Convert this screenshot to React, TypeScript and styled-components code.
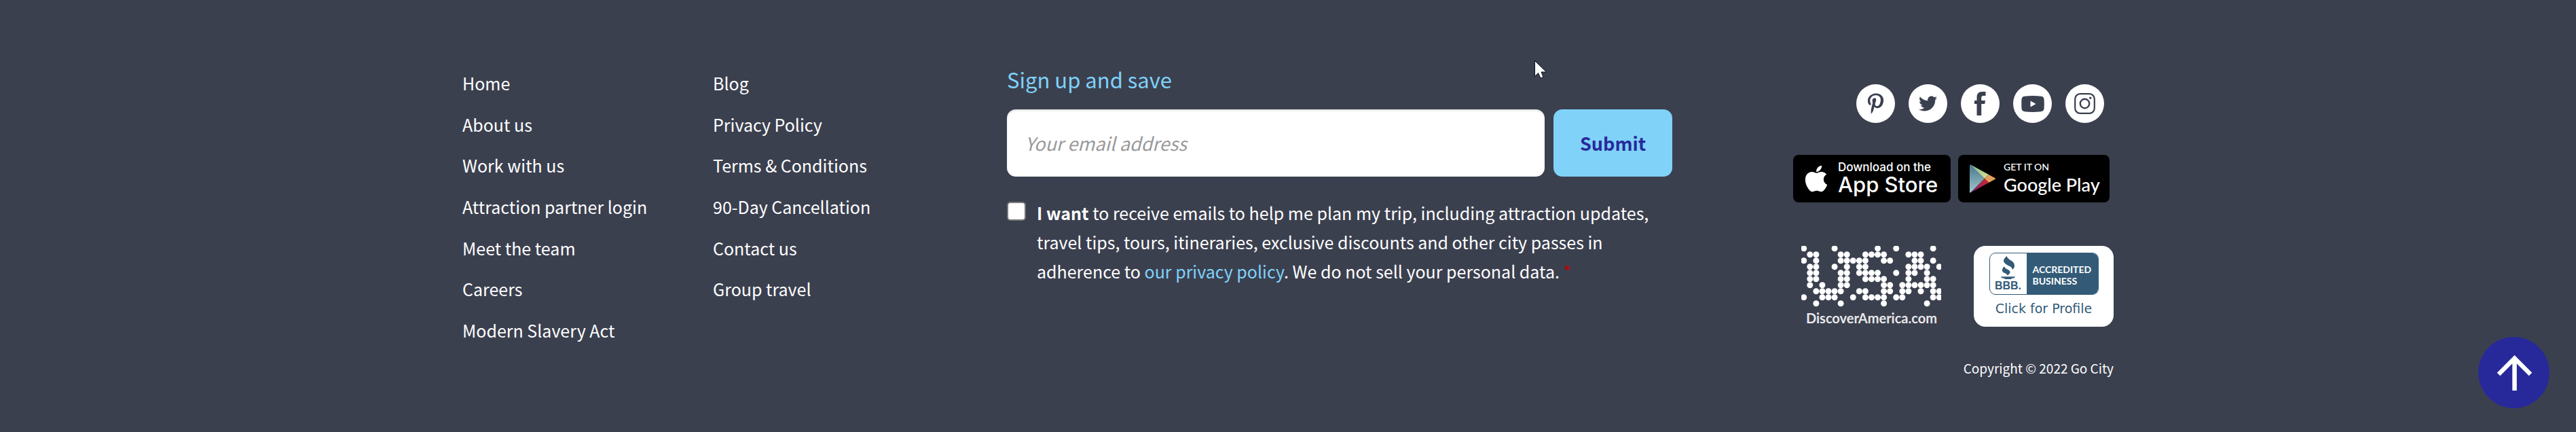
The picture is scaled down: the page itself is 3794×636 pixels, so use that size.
import React from "react";
import styled, { createGlobalStyle } from "styled-components";
import { FaPinterestP, FaTwitter, FaApple } from "react-icons/fa";

const colors = {
  slate: "#3b404f",
  sky: "#80d2f9",
  navy: "#27299a",
  bbb: "#335b78",
};

const GlobalStyle = createGlobalStyle`
  * { box-sizing: border-box; }
  body {
    margin: 0;
    background: ${colors.slate};
    color: #fff;
    font-family: "Noto Sans CJK SC", "Noto Sans", sans-serif;
    font-size: 25px;
  }
  a { color: inherit; text-decoration: none; }
  input, button { font-family: inherit; }
`;

const Footer = styled.footer`
  min-height: 100vh;
  padding: 92px 24px 80px;
`;

const Container = styled.div`
  display: grid;
  grid-template-columns: 802fr 980fr 650fr;
  align-items: start;
  max-width: 2432px;
  margin: 0 auto;
`;

const LinkGrid = styled.ul`
  display: grid;
  grid-auto-flow: column;
  grid-template-rows: repeat(7, 1fr);
  grid-template-columns: 369fr 433fr;
  align-items: center;
  min-height: 424px;
  margin: 0;
  padding: 0;
  list-style: none;
`;

const LinkItem = styled.li<{ $column: number; $row: number }>`
  grid-column: ${(p) => p.$column};
  grid-row: ${(p) => p.$row};
`;

const Title = styled.h2`
  margin: 0 0 19px;
  color: ${colors.sky};
  font-size: 31px;
  font-weight: 400;
  line-height: 50px;
`;

const EmailRow = styled.div`
  display: flex;
  gap: 13px;
  height: 99px;
`;

const EmailInput = styled.input`
  flex: 1;
  min-width: 0;
  padding: 0 27px;
  border: 0;
  border-radius: 13px;
  background: #fff;
  box-shadow: inset 0 2px 3px rgba(0, 0, 0, 0.12);
  font-size: 27px;
  &::placeholder { color: #999; font-style: italic; opacity: 1; }
`;

const SubmitButton = styled.button`
  width: 175px;
  border: 0;
  border-radius: 13px;
  background: ${colors.sky};
  color: ${colors.navy};
  font-size: 27px;
  font-weight: 700;
`;

const Consent = styled.div`
  display: flex;
  align-items: flex-start;
  gap: 16px;
  margin-top: 32px;
`;

const Checkbox = styled.input`
  flex: none;
  width: 28px;
  height: 28px;
  margin: 5px 0 0;
  appearance: none;
  border: 2px solid #767676;
  border-radius: 5px;
  background: #fff;
  &:checked { background: ${colors.navy}; }
`;

const ConsentText = styled.label`
  line-height: 43px;
`;

const PolicyLink = styled.a`
  color: ${colors.sky};
`;

const Required = styled.span`
  color: #c00000;
`;

const Aside = styled.div`
  display: flex;
  flex-direction: column;
  align-items: flex-end;
  padding-top: 32px;
`;

const SocialRow = styled.nav`
  display: flex;
  gap: 20px;
  margin: 0 14px 47px 0;
`;

const SocialLink = styled.a`
  display: grid;
  place-items: center;
  width: 57px;
  height: 57px;
  border-radius: 50%;
  background: #fff;
  color: ${colors.slate};
`;

const StoreRow = styled.div`
  display: flex;
  gap: 11px;
  margin: 0 6px 64px 0;
`;

const StoreBadge = styled.a<{ $width: number; $inset: number; $gap: number }>`
  display: flex;
  align-items: center;
  gap: ${(p) => p.$gap}px;
  width: ${(p) => p.$width}px;
  height: 70px;
  padding-left: ${(p) => p.$inset}px;
  border-radius: 8px;
  background: #000;
  white-space: nowrap;
  svg { flex: none; }
`;

const StoreText = styled.span<{ $font: string }>`
  display: flex;
  flex-direction: column;
  font-family: ${(p) => p.$font}, sans-serif;
`;

const StoreSmall = styled.span<{ $size: number }>`
  font-size: ${(p) => p.$size}px;
  font-weight: 500;
  line-height: 18px;
`;

const StoreName = styled.span<{ $size: number; $weight: number }>`
  font-size: ${(p) => p.$size}px;
  font-weight: ${(p) => p.$weight};
  line-height: 34px;
`;

const PartnerRow = styled.div`
  display: flex;
  align-items: flex-start;
  gap: 48px;
  margin-bottom: 47px;
`;

const UsaLink = styled.a`
  display: block;
  width: 206px;
  svg { display: block; }
`;

const UsaCaption = styled.span`
  display: block;
  padding-left: 7px;
  font: 700 20px/24px Lato, sans-serif;
  color: #e8e8ea;
  white-space: nowrap;
`;

const BbbLink = styled.a`
  display: flex;
  flex-direction: column;
  align-items: center;
  width: 206px;
  height: 119px;
  padding-top: 10px;
  border-radius: 17px;
  background: #fff;
  color: ${colors.bbb};
`;

const BbbSeal = styled.span`
  display: flex;
  width: 161px;
  height: 62px;
  border: 1px solid ${colors.bbb};
  border-radius: 9px;
  overflow: hidden;
`;

const BbbMark = styled.span`
  display: flex;
  flex-direction: column;
  align-items: center;
  width: 54px;
  padding-top: 4px;
  font: 700 16px/16px "Liberation Sans", sans-serif;
`;

const BbbStatus = styled.span`
  flex: 1;
  padding: 15px 0 0 9px;
  background: ${colors.bbb};
  color: #fff;
  font: 700 14px/17px Lato, sans-serif;
`;

const BbbAction = styled.span`
  margin-top: 8px;
  font: 400 19px/24px "DejaVu Sans", sans-serif;
  white-space: nowrap;
`;

const Copyright = styled.small`
  font-size: 19px;
  line-height: 28px;
`;

const TopButton = styled.button`
  position: fixed;
  right: 39px;
  bottom: 35px;
  display: grid;
  place-items: center;
  width: 105px;
  height: 105px;
  padding: 0;
  border: 0;
  border-radius: 50%;
  background: ${colors.navy};
`;

const Pointer = styled.svg`
  position: absolute;
  top: 88px;
  left: 2260px;
  pointer-events: none;
`;

const linkColumns = [
  ["Home", "About us", "Work with us", "Attraction partner login", "Meet the team", "Careers", "Modern Slavery Act"],
  ["Blog", "Privacy Policy", "Terms & Conditions", "90-Day Cancellation", "Contact us", "Group travel"],
];

const usaDots = [
  [0, 5, 12, 15, 21],
  [1, 2, 6, 7, 10, 11, 12, 13, 17, 18, 19],
  [0, 2, 6, 7, 8, 9, 10, 13, 14, 18, 19, 21],
  [1, 2, 5, 7, 9, 10, 17, 18, 19, 20, 22],
  [1, 2, 6, 7, 9, 10, 11, 12, 15, 17, 18, 20],
  [1, 2, 6, 7, 10, 11, 12, 13, 17, 20, 21],
  [1, 3, 6, 7, 13, 14, 16, 17, 18, 19, 20, 21],
  [2, 3, 4, 5, 6, 9, 10, 13, 14, 16, 17, 19, 21, 22],
  [0, 3, 4, 5, 8, 10, 11, 12, 13, 15, 16, 21, 22],
  [2, 6, 13, 20],
];

const FacebookIcon = () => (
  <svg width="17" height="35" viewBox="0 0 17 35" fill="currentColor" aria-hidden="true">
    <path d="M3.5 35V18H0v-5h3.500V8.500C3.500 3 6 0 11.500 0H16.500v6h-3C11 6 10.200 7 10.200 9v4H16l-.8 5h-5v17z" />
  </svg>
);

const YoutubeIcon = () => (
  <svg width="34" height="24" viewBox="0 0 34 24" aria-hidden="true">
    <path
      fill="currentColor"
      d="M5 .8Q17-.6 29 .8 33 1 33.500 5 34 12 33.500 19 33 23 29 23.200 17 24.600 5 23.200 1 23 .5 19 0 12 .5 5 1 1 5 .8z"
    />
    <path fill="#fff" d="M13.500 7.500v9l8-4.500z" />
  </svg>
);

const InstagramIcon = () => (
  <svg width="31" height="31" viewBox="0 0 31 31" fill="none" stroke="currentColor" aria-hidden="true">
    <rect x="1.200" y="1.200" width="28.600" height="28.600" rx="7.500" strokeWidth="2.200" />
    <circle cx="15.500" cy="15.500" r="6.700" strokeWidth="2.400" />
    <circle cx="23.700" cy="7.300" r="1.700" fill="currentColor" stroke="none" />
  </svg>
);

const PlayIcon = () => (
  <svg width="38" height="42" viewBox="0 0 38 42" aria-hidden="true">
    <defs>
      <linearGradient id="playBlue" x1="0" y1="0" x2="0" y2="1">
        <stop offset="0" stopColor="#4a7590" />
        <stop offset="1" stopColor="#9cc9c9" />
      </linearGradient>
      <linearGradient id="playGreen" x1="0" y1="0" x2="1" y2="1">
        <stop offset="0" stopColor="#7fc0a0" />
        <stop offset="1" stopColor="#dbe08a" />
      </linearGradient>
      <linearGradient id="playRed" x1="1" y1="0" x2="0" y2="1">
        <stop offset="0" stopColor="#d2222c" />
        <stop offset="1" stopColor="#7c2a7a" />
      </linearGradient>
    </defs>
    <path fill="url(#playBlue)" d="M0 1.500Q0 0 1.500.5L22 21 1.500 41.500Q0 42 0 40.500z" />
    <path fill="url(#playGreen)" d="M1 .3L28 15l-6 6z" />
    <path fill="#e3a05c" d="M28 15l9.500 5.300q.8.700 0 1.400L28 27l-6-6z" />
    <path fill="url(#playRed)" d="M22 21l6 6L1 41.700z" />
  </svg>
);

const TorchIcon = () => (
  <svg width="23" height="36" viewBox="0 0 24 38" fill="currentColor" aria-hidden="true">
    <path d="M10 0q1 4 7 7 5 3 5 8 0 4-3 6-1-4-6-6-7-3-8-7 0-4 5-8z" />
    <path d="M6 16q1 3 6 5 4 2 3 5-1 2-4 4-1-3-5-4-4-2-3-5 0-3 3-5z" />
    <path d="M1 32h22l-1 2q-5 0-5 2H7q0-2-5-2z" />
  </svg>
);

const socials = [
  { label: "Pinterest", icon: <FaPinterestP size={31} /> },
  { label: "Twitter", icon: <FaTwitter size={27} /> },
  { label: "Facebook", icon: <FacebookIcon /> },
  { label: "YouTube", icon: <YoutubeIcon /> },
  { label: "Instagram", icon: <InstagramIcon /> },
];

export default function App() {
  return (
    <>
      <GlobalStyle />
      <Footer>
        <Container>
          <nav aria-label="Footer">
            <LinkGrid>
              {linkColumns.map((column, c) =>
                column.map((text, r) => (
                  <LinkItem key={text} $column={c + 1} $row={r + 1}>
                    <a href="#">{text}</a>
                  </LinkItem>
                ))
              )}
            </LinkGrid>
          </nav>

          <form onSubmit={(e) => e.preventDefault()}>
            <Title>Sign up and save</Title>
            <EmailRow>
              <EmailInput type="email" placeholder="Your email address" aria-label="Your email address" />
              <SubmitButton type="submit">Submit</SubmitButton>
            </EmailRow>
            <Consent>
              <Checkbox type="checkbox" id="consent" />
              <ConsentText htmlFor="consent">
                <b>I want</b> to receive emails to help me plan my trip, including attraction updates, travel tips,
                tours, itineraries, exclusive discounts and other city passes in adherence to{" "}
                <PolicyLink href="#">our privacy policy</PolicyLink>. We do not sell your personal data.
                <Required> *</Required>
              </ConsentText>
            </Consent>
          </form>

          <Aside>
            <SocialRow aria-label="Social media">
              {socials.map((s) => (
                <SocialLink key={s.label} href="#" aria-label={s.label}>
                  {s.icon}
                </SocialLink>
              ))}
            </SocialRow>
            <StoreRow>
              <StoreBadge href="#" $width={232} $inset={12} $gap={10}>
                <FaApple size={44} />
                <StoreText $font="Inter">
                  <StoreSmall $size={17}>Download on the</StoreSmall>
                  <StoreName $size={31} $weight={500}>App Store</StoreName>
                </StoreText>
              </StoreBadge>
              <StoreBadge href="#" $width={223} $inset={17} $gap={12}>
                <PlayIcon />
                <StoreText $font="Lato">
                  <StoreSmall $size={14}>GET IT ON</StoreSmall>
                  <StoreName $size={27} $weight={500}>Google Play</StoreName>
                </StoreText>
              </StoreBadge>
            </StoreRow>
            <PartnerRow>
              <UsaLink href="#">
                <svg width="206" height="94" viewBox="0 0 206 94" fill="#fff" aria-hidden="true">
                  {usaDots.map((cols, row) =>
                    cols.map((col) => <circle key={`${row}-${col}`} cx={3.7 + col * 9.07} cy={3.7 + row * 9} r="4.500" />)
                  )}
                </svg>
                <UsaCaption>DiscoverAmerica.com</UsaCaption>
              </UsaLink>
              <BbbLink href="#">
                <BbbSeal>
                  <BbbMark>
                    <TorchIcon />
                    BBB.
                  </BbbMark>
                  <BbbStatus>ACCREDITED BUSINESS</BbbStatus>
                </BbbSeal>
                <BbbAction>Click for Profile</BbbAction>
              </BbbLink>
            </PartnerRow>
            <Copyright>Copyright © 2022 Go City</Copyright>
          </Aside>
        </Container>
      </Footer>
      <TopButton type="button" aria-label="Back to top">
        <svg width="52" height="52" viewBox="0 0 52 52" fill="none" stroke="#fff" strokeWidth="6.500" aria-hidden="true">
          <path d="M26.500 52V5M3 28L26.500 4.500 50 28" />
        </svg>
      </TopButton>
      <Pointer width="20" height="28" viewBox="0 0 20 28" aria-hidden="true">
        <path d="M.5 1.500v23l5-5 3.500 7.500 4-1.500-3-7.500h7.500z" fill="#fff" stroke="#0b0f20" />
      </Pointer>
    </>
  );
}
